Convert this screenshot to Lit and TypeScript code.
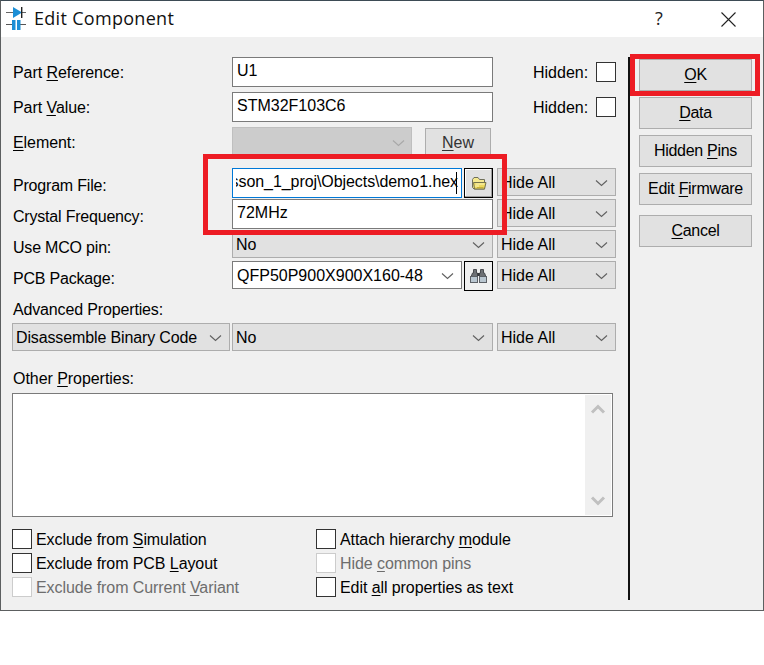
import { LitElement, html, css, svg } from "lit";
import { customElement } from "lit/decorators.js";

const chevron = html`<svg class="chev" width="13" height="8" viewBox="0 0 13 8"><path d="M1 1.5 L6.5 6.5 L12 1.5" fill="none" stroke="#606060" stroke-width="1.1"/></svg>`;

const folder = svg`<svg width="16" height="13" viewBox="0 0 16 13"><path d="M1.5 2.5 L3 0.5 H7 L8.5 2.5 H13.5 V12 H3 L1.5 10.5 Z" fill="#f5e98f" stroke="#6f6f5a"/><path d="M2.5 5.5 H15 L13.5 12 H3.5 Z" fill="#ecd95e" stroke="#74734c"/><path d="M4.5 7 H13.5 M4 9 H8" stroke="#fbf5bd"/><path d="M6 10.5 H12.5" stroke="#c9b13a"/></svg>`;

const binoculars = svg`<svg width="17" height="14" viewBox="0 0 17 14"><path d="M3.5 0.5 H6.5 V4 H7.5 V8 H1 L2.5 4 H3.5 Z" fill="#6d7074" stroke="#4a4c50" stroke-width="1"/><path d="M10.5 0.5 H13.5 V4 H14.5 L16 8 H9.5 V4 H10.5 Z" fill="#6d7074" stroke="#4a4c50" stroke-width="1"/><rect x="7.5" y="4" width="2" height="3" fill="#34373a"/><rect x="0.5" y="7.5" width="7" height="6" fill="#b9c6d0" stroke="#5c6066"/><rect x="9.5" y="7.5" width="7" height="6" fill="#b9c6d0" stroke="#5c6066"/></svg>`;

const appIcon = svg`<svg class="app-icon" width="21" height="25" viewBox="0 0 21 25"><path d="M0 5.5 H7 M15 5.5 H20" stroke="#666"/><path d="M7 0 L16 5.5 L7 11 Z" fill="#1c8fd6"/><rect x="15" y="0" width="1.4" height="11" fill="#222"/><path d="M0 17.5 H6 M14 17.5 H20" stroke="#555"/><rect x="6" y="13" width="3.5" height="10" fill="#1c8fd6"/><rect x="11" y="13" width="3.5" height="10" fill="#1c8fd6"/></svg>`;

@customElement("app-root")
export class AppRoot extends LitElement {
  static styles = css`
    :host { display: block; width: 764px; height: 665px; background: #fff; position: relative; overflow: hidden;
      font-family: "Liberation Sans", Arial, sans-serif; font-size: 16px; color: #000; }
    * { box-sizing: border-box; }
    .dialog { width: 764px; height: 611px; background: #f0f0f0; border: 1px solid #5c5f60; border-top-color: #3d4b55; display: flex; flex-direction: column; }
    .title { height: 36px; background: #fff; display: flex; align-items: center; flex: none; padding-left: 5px; }
    .app-icon { flex: none; margin-right: 7px; margin-top: 1px; }
    .title-text { font-family: "Open Sans", sans-serif; font-size: 18px; color: #111; letter-spacing: 0.3px; flex: 1; line-height: 34px; height: 36px; }
    .help { font-family: "Open Sans", sans-serif; font-size: 18px; color: #222; width: 20px; text-align: center; margin-right: 52px; line-height: 34px; height: 36px; }
    .close { margin-right: 27px; flex: none; }
    .body { flex: 1; display: flex; min-height: 0; }
    .left { width: 627px; padding: 20px 0 0 11px; flex: none; }
    .divider { width: 2px; height: 543px; margin-top: 20px; background: #111; flex: none; }
    .right { padding: 22px 0 0 9px; display: flex; flex-direction: column; flex: none; }
    .row { display: flex; align-items: flex-start; }
    .r35 { height: 35px; }
    .r41 { height: 41px; }
    .r31 { height: 31px; }
    .label { width: 220px; flex: none; padding-left: 1px; line-height: 32px; height: 30px; white-space: nowrap; letter-spacing: -0.07px; }
    .r31 .label { line-height: 36px; letter-spacing: -0.2px; }
    .input { height: 30px; background: #fff; border: 1px solid #7a7a7a; line-height: 26px; padding: 0 4px; white-space: nowrap; overflow: hidden; flex: none; }
    .w261 { width: 261px; }
    .w230 { width: 230px; }
    .focus { border-color: #0078d7; padding: 0 3px; position: relative; }
    .clip { display: flex; justify-content: flex-end; overflow: hidden; height: 28px; letter-spacing: -0.07px; }
    .caret { position: absolute; right: 4px; top: 3px; width: 1px; height: 22px; background: #000; }
    .select { height: 28px; background: #e1e1e1; border: 1px solid #adadad; display: flex; align-items: center; justify-content: space-between; padding: 2px 7px 0 3px; flex: none; white-space: nowrap; line-height: 26px; }
    .select.white { background: #fff; border-color: #7a7a7a; padding-left: 4px; }
    .select.off { background: #ccc; border-color: #bfbfbf; height: 30px; width: 180px; justify-content: flex-end; padding-right: 6px; }
    .off .chev path { stroke: #a8a8a8; }
    .hide { width: 119px; margin-left: 4px; }
    .new { width: 66px; height: 29px; margin: 1px 0 0 13px; background: #e1e1e1; border: 1px solid #adadad; text-align: center; line-height: 27px; color: #333; }
    .hid { margin-left: 40px; display: flex; align-items: flex-start; line-height: 32px; height: 30px; }
    .hid .box { margin: 5px 0 0 8px; }
    .box { width: 20px; height: 20px; background: #fff; border: 1px solid #333; flex: none; }
    .box.off { border-color: #ccc; }
    .icon-btn { width: 29px; height: 30px; margin-left: 2px; border: 1px solid #000; display: flex; align-items: center; justify-content: center; flex: none; background: #f0f0f0; }
    .icon-btn.raised { background: #e1e1e1; box-shadow: inset -1px -1px 0 #a0a0a0, inset 1px 1px 0 #fff; }
    .adv { height: 31px; line-height: 36px; padding-left: 1px; letter-spacing: -0.15px; }
    .wd { width: 218px; margin-right: 2px; letter-spacing: -0.13px; }
    .other { height: 42px; line-height: 56px; padding-left: 1px; letter-spacing: -0.05px; }
    .text { width: 601px; height: 124px; background: #fff; border: 1px solid #7a7a7a; padding: 1px; display: flex; justify-content: flex-end; }
    .sb { width: 26px; background: #f0f0f0; display: flex; flex-direction: column; justify-content: space-between; align-items: center; padding: 9px 0; }
    .checks { display: flex; margin-top: 12px; }
    .col { display: flex; flex-direction: column; gap: 4px; }
    .col.a { width: 304px; }
    .chk { display: flex; align-items: center; height: 20px; gap: 4px; white-space: nowrap; letter-spacing: -0.08px; }
    .chk span { padding-top: 2px; }
    .dis { color: #6d6d6d; }
    .btn { width: 113px; height: 32px; background: #e1e1e1; border: 1px solid #adadad; text-align: center; line-height: 30px; white-space: nowrap; flex: none; letter-spacing: -0.3px; margin-top: 6px; }
    .btn.first { margin-top: 0; }
    .btn.last { margin-top: 10px; }
    .mark { position: absolute; border: 5px solid #ed1c24; pointer-events: none; }
    .m1 { left: 203px; top: 154px; width: 304px; height: 81px; }
    .m2 { left: 630px; top: 54px; width: 130px; height: 42px; }
    u { text-underline-offset: 2px; }
  `;

  private hide() {
    return html`<div class="select hide"><span>Hide All</span>${chevron}</div>`;
  }

  render() {
    return html`
      <div class="dialog">
        <div class="title">
          ${appIcon}
          <span class="title-text">Edit Component</span>
          <span class="help">?</span>
          <svg class="close" width="15" height="15" viewBox="0 0 15 15"><path d="M0.5 0.5 L14.5 14.5 M14.5 0.5 L0.5 14.5" stroke="#222" stroke-width="1.1"/></svg>
        </div>
        <div class="body">
          <div class="left">
            <div class="row r35">
              <div class="label">Part <u>R</u>eference:</div>
              <div class="input w261">U1</div>
              <div class="hid">Hidden:<div class="box"></div></div>
            </div>
            <div class="row r35">
              <div class="label">Part <u>V</u>alue:</div>
              <div class="input w261">STM32F103C6</div>
              <div class="hid">Hidden:<div class="box"></div></div>
            </div>
            <div class="row r41">
              <div class="label"><u>E</u>lement:</div>
              <div class="select off">${chevron}</div>
              <div class="new"><u>N</u>ew</div>
            </div>
            <div class="row r31">
              <div class="label">Program File:</div>
              <div class="input w230 focus"><div class="clip"><span>lesson_1_proj\\Objects\\demo1.hex</span></div><i class="caret"></i></div>
              <div class="icon-btn raised">${folder}</div>
              ${this.hide()}
            </div>
            <div class="row r31">
              <div class="label">Crystal Frequency:</div>
              <div class="input w261">72MHz</div>
              ${this.hide()}
            </div>
            <div class="row r31">
              <div class="label">Use MCO pin:</div>
              <div class="select w261">No${chevron}</div>
              ${this.hide()}
            </div>
            <div class="row r31">
              <div class="label">PCB Package:</div>
              <div class="select white w230">QFP50P900X900X160-48${chevron}</div>
              <div class="icon-btn">${binoculars}</div>
              ${this.hide()}
            </div>
            <div class="adv">Advanced Properties:</div>
            <div class="row">
              <div class="select wd">Disassemble Binary Code${chevron}</div>
              <div class="select w261">No${chevron}</div>
              ${this.hide()}
            </div>
            <div class="other">Other <u>P</u>roperties:</div>
            <div class="text">
              <div class="sb">
                <svg width="16" height="10" viewBox="0 0 16 10"><path d="M2 8.5 L8 2.5 L14 8.5" fill="none" stroke="#c0c0c0" stroke-width="3"/></svg>
                <svg width="16" height="10" viewBox="0 0 16 10"><path d="M2 1.5 L8 7.5 L14 1.5" fill="none" stroke="#c0c0c0" stroke-width="3"/></svg>
              </div>
            </div>
            <div class="checks">
              <div class="col a">
                <div class="chk"><div class="box"></div><span>Exclude from <u>S</u>imulation</span></div>
                <div class="chk"><div class="box"></div><span>Exclude from PCB <u>L</u>ayout</span></div>
                <div class="chk dis"><div class="box off"></div><span>Exclude from Current <u>V</u>ariant</span></div>
              </div>
              <div class="col">
                <div class="chk"><div class="box"></div><span>Attach hierarchy <u>m</u>odule</span></div>
                <div class="chk dis"><div class="box off"></div><span>Hide <u>c</u>ommon pins</span></div>
                <div class="chk"><div class="box"></div><span>Edit <u>a</u>ll properties as text</span></div>
              </div>
            </div>
          </div>
          <div class="divider"></div>
          <div class="right">
            <div class="btn first"><u>O</u>K</div>
            <div class="btn"><u>D</u>ata</div>
            <div class="btn">Hidden <u>P</u>ins</div>
            <div class="btn">Edit <u>F</u>irmware</div>
            <div class="btn last"><u>C</u>ancel</div>
          </div>
        </div>
      </div>
      <div class="mark m1"></div>
      <div class="mark m2"></div>
    `;
  }
}
